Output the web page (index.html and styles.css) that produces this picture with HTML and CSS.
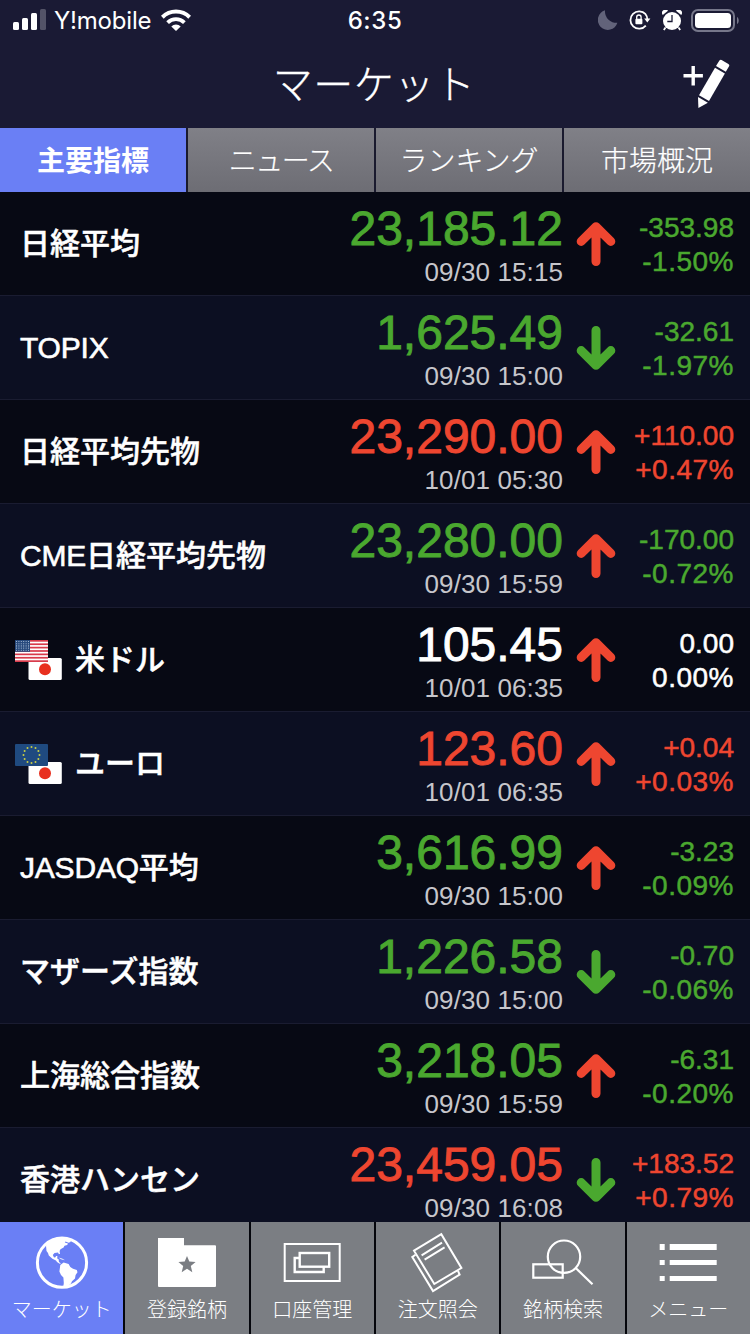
FILE: index.html
```html
<!DOCTYPE html>
<html lang="ja">
<head>
    <meta charset="UTF-8">
    <meta name="viewport" content="width=device-width, initial-scale=1.0">
    <title>マーケット</title>
    <link rel="stylesheet" href="styles.css">
</head>
<body>
    <div class="status-bar">
        <div class="status-left">
            <svg class="signal" width="33" height="22" viewBox="0 0 33 22" fill="#fff">
                <rect x="0" y="13" width="6" height="8" rx="1.5"/>
                <rect x="9" y="9" width="6" height="12" rx="1.5"/>
                <rect x="18" y="4" width="6" height="17" rx="1.5"/>
                <rect x="27" y="0" width="6" height="21" rx="1.5" opacity="0.25"/>
            </svg>
            <span class="carrier">Y!mobile</span>
            <svg class="wifi" width="30" height="23" viewBox="0 0 30 23" fill="none" stroke="#fff">
                <path d="M1.3 8.2A19.6 19.6 0 0 1 28.7 8.2" stroke-width="4"/>
                <path d="M6.6 13.6A12 12 0 0 1 23.4 13.6" stroke-width="3.8"/>
                <path d="M15 22L10.3 17.4A6.7 6.7 0 0 1 19.7 17.4Z" fill="#fff" stroke="none"/>
            </svg>
        </div>
        <div class="clock">6:35</div>
        <div class="status-right">
            <svg class="moon" width="20" height="20" viewBox="0 0 20 20" fill="#62637a">
                <path d="M7 0.3A11.5 11.5 0 0 0 19.4 12.8A10 10 0 1 1 7 0.3Z"/>
            </svg>
            <svg class="lock" width="22" height="20" viewBox="0 0 22 20" fill="none" stroke="#fff">
                <path d="M16.6 4.2A8.7 8.7 0 1 0 16.8 15.6M16.4 4A8.7 8.7 0 0 1 18.3 9" stroke-width="1.8"/>
                <path d="M15.2 8.4H21.4L18.3 12.6Z" fill="#fff" stroke="none"/>
                <rect x="6.4" y="8.8" width="7" height="5.4" rx="1" fill="#fff" stroke="none"/>
                <path d="M7.7 9V7.2a2.2 2.2 0 0 1 4.4 0V9" stroke-width="1.3"/>
            </svg>
            <svg class="alarm" width="20" height="21" viewBox="0 0 20 21">
                <circle cx="10" cy="11" r="9" fill="#fff"/>
                <path d="M0.8 5A3.2 3.2 0 0 1 6 0.8ZM19.2 5A3.2 3.2 0 0 0 14 0.8Z" fill="#fff"/>
                <path d="M3.5 17.5L1.8 20M16.5 17.5L18.2 20" stroke="#fff" stroke-width="1.8"/>
                <path d="M10 5V11.5H5.3" fill="none" stroke="#1a1a34" stroke-width="1.3"/>
            </svg>
            <svg class="battery" width="48" height="23" viewBox="0 0 48 23">
                <rect x="1" y="1" width="42" height="21" rx="6" fill="none" stroke="#76778a" stroke-width="2"/>
                <rect x="4" y="4" width="36" height="15" rx="3.5" fill="#fff"/>
                <path d="M46 8C48.3 9 48.3 14 46 15Z" fill="#76778a"/>
            </svg>
        </div>
    </div>

    <header class="header">
        <h1>マーケット</h1>
        <svg class="edit" width="48" height="50" viewBox="0 0 48 50" fill="#fff">
            <path d="M9.5 7h3.4v8h8v3.4h-8v8h-3.4v-8h-8v-3.4h8z"/>
            <path d="M37.4 1.4Q38.4 0.2 39.6 0.9L46.4 4.9Q47.8 5.7 47.2 7L43.8 12.8L34 7.1Z"/>
            <path d="M33 8.7L42.9 14.4L27 42L17 36.2Z"/>
            <path d="M16 38L25.9 43.7L16.4 49Z"/>
        </svg>
    </header>

    <nav class="tabs">
        <div class="tab active">主要指標</div>
        <div class="tab narrow">ニュース</div>
        <div class="tab">ランキング</div>
        <div class="tab">市場概況</div>
    </nav>

    <main class="list" id="list"></main>

    <footer class="bottom-nav">
        <div class="nav-item active">
            <svg width="64" height="62" viewBox="0 0 64 62">
                <circle cx="32" cy="31.7" r="24.6" fill="none" stroke="#fff" stroke-width="3"/>
                <g fill="#fff">
                    <path d="M16 14.7L18 10.5L23 7.5L29.6 6.3L36 6.5L41 9L40.5 11L38.6 11.7L35.5 10.5L34.8 11.6L38 12.4L37.2 14L34.5 14.7L33.6 16.5L30.5 18.2L29.6 20L30 23L28.8 23L28 21.6L24.5 22L22.8 24L24 26.4L25.5 26.2L26 25L27.4 25L27.2 27.6L28.6 28.2L29 31L31 32.4L29.6 32.8L27 31L26 29.4L22.4 27.8L18.8 24.6L18 22L16.5 20Z"/>
                    <path d="M30.3 34L33.6 31.4L38.6 33L40.3 36L43 37.8L46.8 39L47.5 41.3L45.6 44L45 47.6L42 50.2L41 52.6L39.2 54L38 57L33.2 56.7L33.8 52L33.4 46.5L31 44L29.4 40.5Z"/>
                    <path d="M28.5 26.4L32.5 27.8L35 29.3L31 28.2Z"/>
                </g>
            </svg>
            <span>マーケット</span>
        </div>
        <div class="nav-item">
            <svg width="64" height="62" viewBox="0 0 64 62">
                <path d="M3 7H29V14.3H60Q61 14.3 61 15.3V55Q61 56 60 56H4Q3 56 3 55Z" fill="#fff"/>
                <path d="M32 25L34.3 30.6L40.6 31L35.8 35L37.3 41.2L32 37.8L26.7 41.2L28.2 35L23.4 31L29.7 30.6Z" fill="#7b7e83"/>
            </svg>
            <span>登録銘柄</span>
        </div>
        <div class="nav-item">
            <svg width="64" height="62" viewBox="0 0 64 62" fill="none" stroke="#fff" stroke-width="2">
                <rect x="4.7" y="13" width="55" height="37"/>
                <rect x="19.7" y="22" width="29.5" height="13.7" stroke-width="2.4"/>
                <path d="M19 27H14.7V41H43.7V36" stroke-width="2.4"/>
            </svg>
            <span>口座管理</span>
        </div>
        <div class="nav-item">
            <svg width="64" height="62" viewBox="0 0 64 62" fill="none" stroke="#fff" stroke-width="2">
                <path d="M8 19.7L35.3 3.2L55.4 37L28.3 53Z"/>
                <path d="M9.5 23.8L6.3 26L27 60L53.6 43.7L52 39.8"/>
                <path d="M15.6 24.3L36 11.7M18.6 28.7L38.6 16.3"/>
            </svg>
            <span>注文照会</span>
        </div>
        <div class="nav-item">
            <svg width="64" height="62" viewBox="0 0 64 62" fill="none" stroke="#fff" stroke-width="2.2">
                <circle cx="33" cy="25.7" r="16.2"/>
                <rect x="2.3" y="33.3" width="29.4" height="13.4"/>
                <path d="M45 37.3L61.5 53.2"/>
            </svg>
            <span>銘柄検索</span>
        </div>
        <div class="nav-item">
            <svg width="64" height="62" viewBox="0 0 64 62" fill="#fff">
                <path d="M3.7 13h5v6h-5zM3.7 29h5v5h-5zM3.7 45h5v5h-5z"/>
                <path d="M13.7 13h47v6h-47zM13.7 29h47v5h-47zM13.7 45h47v5h-47z"/>
            </svg>
            <span>メニュー</span>
        </div>
    </footer>

    <script>
        // name, price, time, arrow, change, percent, color, flag
        const rows = [
            ["日経平均", "23,185.12", "09/30 15:15", "up", "-353.98", "-1.50%", "green"],
            ["TOPIX", "1,625.49", "09/30 15:00", "down", "-32.61", "-1.97%", "green"],
            ["日経平均先物", "23,290.00", "10/01 05:30", "up", "+110.00", "+0.47%", "red"],
            ["CME日経平均先物", "23,280.00", "09/30 15:59", "up", "-170.00", "-0.72%", "green"],
            ["米ドル", "105.45", "10/01 06:35", "up", "0.00", "0.00%", "white", "us"],
            ["ユーロ", "123.60", "10/01 06:35", "up", "+0.04", "+0.03%", "red", "eu"],
            ["JASDAQ平均", "3,616.99", "09/30 15:00", "up", "-3.23", "-0.09%", "green"],
            ["マザーズ指数", "1,226.58", "09/30 15:00", "down", "-0.70", "-0.06%", "green"],
            ["上海総合指数", "3,218.05", "09/30 15:59", "up", "-6.31", "-0.20%", "green"],
            ["香港ハンセン", "23,459.05", "09/30 16:08", "down", "+183.52", "+0.79%", "red"],
        ];

        const usFlag = () => {
            let s = '<rect width="33" height="22" rx="1" fill="#fff"/>';
            for (let i = 0; i < 7; i++) {
                s += `<rect y="${(i * 3.38).toFixed(2)}" width="33" height="1.7" fill="#d8394a"/>`;
            }
            s += '<rect width="15" height="11.8" fill="#27497c"/>';
            for (let y = 0; y < 5; y++) {
                for (let x = 0; x < 6; x++) {
                    s += `<circle cx="${1.5 + x * 2.4}" cy="${1.5 + y * 2.2}" r="0.55" fill="#b9cbe0"/>`;
                }
            }
            return s;
        };

        const euFlag = () => {
            let s = '<rect width="33" height="22" rx="1" fill="#1f4a80"/>';
            for (let i = 0; i < 12; i++) {
                const a = i * Math.PI / 6;
                s += `<circle cx="${(16.5 + 8 * Math.sin(a)).toFixed(1)}" cy="${(11 - 8 * Math.cos(a)).toFixed(1)}" r="1" fill="#c9cf45"/>`;
            }
            return s;
        };

        const flags = (type) => `
            <svg class="flags" width="48" height="41" viewBox="0 0 48 41">
                <rect x="13.5" y="18" width="33.3" height="22" rx="1.5" fill="#fff"/>
                <circle cx="30" cy="29.2" r="6" fill="#e8301f"/>
                ${type === "us" ? usFlag() : euFlag()}
            </svg>`;

        const arrow = (dir) => `
            <svg class="arrow ${dir}" width="40" height="46" viewBox="0 0 40 46">
                <path d="M20 40.5V6M5.2 20.4L20 5.8L34.8 20.4"/>
            </svg>`;

        // the latin font has no medium weight, so its letters get a thin stroke
        const label = (name) => name.replace(/[A-Z]+/, '<span class="latin">$&</span>');

        document.getElementById('list').innerHTML = rows.map(([name, price, time, dir, diff, rate, color, flag]) => `
            <div class="row">
                <div class="name">${flag ? flags(flag) : ""}<span>${label(name)}</span></div>
                <div class="quote">
                    <div class="price ${color}">${price}</div>
                    <div class="time">${time}</div>
                </div>
                ${arrow(dir)}
                <div class="change ${color}">
                    <div>${diff}</div>
                    <div class="rate">${rate}</div>
                </div>
            </div>`).join("");
    </script>
</body>
</html>
```
FILE: styles.css
```css
* {
    box-sizing: border-box;
}

body {
    display: flex;
    flex-direction: column;
    width: 750px;
    height: 1334px;
    margin: 0;
    overflow: hidden;
    background: #070914;
    color: #fff;
    font-family: 'Liberation Sans', 'Noto Sans CJK JP', sans-serif;
}

svg {
    display: block;
    flex-shrink: 0;
}

/* Status bar */
.status-bar {
    display: grid;
    grid-template-columns: 1fr auto 1fr;
    align-items: center;
    height: 40px;
    padding: 0 11px 0 13px;
    background: #1a1a34;
    font-family: Inter, sans-serif;
}

.status-left,
.status-right {
    display: flex;
    align-items: center;
}

.carrier {
    margin: 0 10px 0 8px;
    font-size: 24px;
    letter-spacing: -0.2px;
}

.clock {
    margin-left: -2px;
    font-size: 24px;
    font-weight: 500;
    letter-spacing: 0.6px;
}

.status-right {
    justify-content: flex-end;
}

.lock {
    margin-left: 11px;
}

.alarm {
    margin: 0 9px 0 11px;
}

/* Title */
.header {
    display: grid;
    grid-template-columns: 1fr auto 1fr;
    align-items: center;
    height: 88px;
    padding: 0 20px;
    background: #1a1a34;
}

.header h1 {
    grid-column: 2;
    margin: 0 2px 0 0;
    padding-bottom: 4px;
    font-family: 'Noto Sans CJK JP', sans-serif;
    font-size: 40px;
    font-weight: 300;
    line-height: 80px;
    letter-spacing: 0.5px;
    -webkit-text-stroke: 0.3px currentColor;
}

.edit {
    justify-self: end;
}

/* Tabs */
.tabs {
    display: grid;
    grid-template-columns: repeat(4, 1fr);
    gap: 2px;
    height: 64px;
    background: #1a1a2e;
}

.tab {
    background: linear-gradient(#808087, #6d6d74);
    font-family: 'Noto Sans CJK JP', sans-serif;
    font-size: 28px;
    font-weight: 300;
    line-height: 62px;
    text-align: center;
    -webkit-text-stroke: 0.2px currentColor;
}

.tab.active {
    background: #6a7ff5;
    font-weight: 700;
    -webkit-text-stroke: 0;
}

.tab.narrow {
    letter-spacing: -1.5px;
}

/* Quotes */
.list {
    flex: 1;
    min-height: 0;
    overflow: hidden;
}

.row {
    display: flex;
    align-items: center;
    height: 104px;
    padding: 0 16px 0 20px;
    background: #070914;
    border-bottom: 1px solid #1a1c31;
}

.row:nth-child(even) {
    background: #0c0f22;
}

.name {
    display: flex;
    align-items: center;
    flex: 1;
    padding-top: 1px;
    font-size: 30px;
    font-weight: 500;
    line-height: 34px;
    white-space: nowrap;
    -webkit-text-stroke: 0.5px currentColor;
}

.latin {
    letter-spacing: -0.2px;
    -webkit-text-stroke: 0.6px currentColor;
}

.flags {
    margin: 0 12px 0 -5px;
}

.quote {
    padding-top: 5px;
    text-align: right;
}

.price {
    margin-right: -1px;
    font-size: 48px;
    line-height: 51px;
    -webkit-text-stroke: 0.9px currentColor;
}

.time {
    margin-right: -1px;
    color: #c6c6cb;
    font-size: 26px;
    line-height: 36px;
    letter-spacing: 0.1px;
}

.arrow {
    margin: 0 12px 0 14px;
    fill: none;
    stroke: #ee4630;
    stroke-width: 9;
    stroke-linecap: round;
    stroke-linejoin: round;
}

.arrow.down {
    stroke: #4aa82f;
    transform: rotate(180deg);
}

.change {
    width: 106px;
    padding-top: 2px;
    font-size: 28px;
    line-height: 34px;
    text-align: right;
    -webkit-text-stroke: 0.5px currentColor;
}

.rate {
    letter-spacing: 0.5px;
}

.green {
    color: #4aa82f;
}

.red {
    color: #ee4630;
}

.white {
    color: #fff;
}

/* Bottom navigation */
.bottom-nav {
    display: grid;
    grid-template-columns: repeat(6, 1fr);
    gap: 2px;
    height: 112px;
    background: #05060c;
}

.nav-item {
    display: flex;
    flex-direction: column;
    align-items: center;
    padding-top: 9px;
    background: #7b7e83;
    font-family: 'Noto Sans CJK JP', sans-serif;
    font-size: 20px;
    font-weight: 300;
    line-height: 32px;
}

.nav-item.active {
    background: #6a7ff5;
}
```
